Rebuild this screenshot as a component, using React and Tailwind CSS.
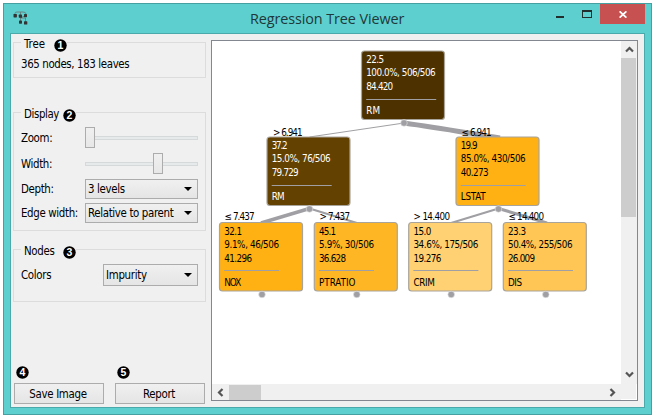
import React from 'react';

const UI_FONT = "font-['DejaVu_Sans_Condensed','DejaVu_Sans',sans-serif] [font-stretch:condensed]";

function Badge({ n, className = '' }) {
  return (
    <svg className={`block h-[13px] w-[13px] shrink-0 ${className}`} viewBox="0 0 13 13">
      <circle cx="6.5" cy="6.5" r="6.2" fill="#000" />
      <text x="6.5" y="10.2" textAnchor="middle" fontSize="10.5" fontWeight="700" fill="#fff" fontFamily="Liberation Sans, sans-serif">{n}</text>
    </svg>
  );
}

function Group({ title, n, className = '', titleClass, children }) {
  return (
    <section className={`relative ml-[2px] w-[193px] border border-[#dcdcdc] ${className}`}>
      <div className="absolute -top-[8px] left-[7px] flex h-[17px] items-center bg-[#f0f0f0] pl-[3px]">
        <span className={titleClass}>{title}</span>
        <Badge n={n} className="mt-[3px]" />
      </div>
      {children}
    </section>
  );
}

function Select({ className, children }) {
  return (
    <div className={`flex items-center justify-between border border-[#acacac] bg-linear-to-b from-[#f0f0f0] to-[#e5e5e5] pr-[5px] pl-[2px] ${className}`}>
      <span>{children}</span>
      <svg className="h-[4px] w-[8px] shrink-0" viewBox="0 0 8 4"><path d="M0 0H8L4 4Z" fill="#000" /></svg>
    </div>
  );
}

function Slider({ handleClass }) {
  return (
    <div className="relative flex h-[21px] w-[113px] items-center">
      <div className="h-[4px] w-full border border-[#d6d9d9] bg-[#e7eaea]" />
      <div className={`absolute top-0 h-[21px] w-[10px] border border-[#acacac] bg-linear-to-b from-[#f0f0f0] to-[#e7e7e7] ${handleClass}`} />
    </div>
  );
}

const nodes = [
  { x: 361.5, y: 51, fill: '#4d3200', light: true, rows: [['22.5', 18], ['100.0%, 506/506', 69.5], ['84.420', 27]], sep: 70, name: ['RM', 14] },
  { x: 267, y: 137, fill: '#634100', light: true, rows: [['37.2', 16], ['15.0%, 76/506', 59], ['79.729', 27]], sep: 60, name: ['RM', 13] },
  { x: 456, y: 137, fill: '#ffb013', rows: [['19.9', 17], ['85.0%, 430/506', 65], ['40.273', 28]], sep: 65, name: ['LSTAT', 25] },
  { x: 219.5, y: 222.5, fill: '#ffb013', rows: [['32.1', 18], ['9.1%, 46/506', 55], ['41.296', 28]], sep: 55, name: ['NOX', 17] },
  { x: 314.3, y: 222.5, fill: '#ffb624', rows: [['45.1', 17], ['5.9%, 30/506', 55], ['36.628', 27]], sep: 55, name: ['PTRATIO', 36.5] },
  { x: 408.7, y: 222.5, fill: '#ffd173', rows: [['15.0', 18], ['34.6%, 175/506', 65], ['19.276', 28]], sep: 65, name: ['CRIM', 21.5] },
  { x: 503.3, y: 222.5, fill: '#ffc655', rows: [['23.3', 18], ['50.4%, 255/506', 64.5], ['26.009', 27]], sep: 65, name: ['DIS', 14] },
];

const edges = [
  ['M404 123L309.5 137', 1],
  ['M404 123C440 128 468 133 500 138', 5],
  ['M309.5 208.5L261 223', 3.4],
  ['M309.5 208.5L357 223', 2],
  ['M498.5 208.5L451 223', 2],
  ['M498.5 208.5L547 223', 3],
];

const labels = [
  ['> 6.941', 273, 135.5, 29.5],
  ['≤ 6.941', 461.5, 135.5, 30],
  ['≤ 7.437', 224.5, 220.3, 30],
  ['> 7.437', 319.5, 220.3, 30.5],
  ['> 14.400', 413.5, 220.3, 36.5],
  ['≤ 14.400', 508.5, 220.3, 35.5],
];

const Label = ({ x, y, w, fill, children }) => (
  <text x={x} y={y} textLength={w} lengthAdjust="spacing" fill={fill}>{children}</text>
);

function TreeCanvas() {
  return (
    <svg className="block h-[343px] w-[409px] bg-white" viewBox="212 41 409 343" fontSize="9.8" fontFamily="DejaVu Sans Condensed, DejaVu Sans, sans-serif" style={{ fontStretch: 'condensed' }}>
      {edges.map(([d, w]) => <path key={d} d={d} stroke="#a0a0a4" strokeWidth={w} fill="none" />)}
      {nodes.map((n) => {
        const color = n.light ? '#fff' : '#000';
        const tx = n.x + 4.7;
        return (
          <g key={n.x}>
            <rect x={n.x} y={n.y} width="83" height="68.5" rx="3" fill={n.fill} stroke="#a9a49b" strokeWidth="1.2" />
            {n.rows.map(([t, w], i) => <Label key={t} x={tx} y={n.y + [12.2, 25.2, 39.2][i]} w={w} fill={color}>{t}</Label>)}
            <path d={`M${tx} ${Math.floor(n.y + 48) + 0.5}h${n.sep}`} stroke="#a0a0a4" />
            <Label x={tx} y={n.y + 63.4} w={n.name[1]} fill={color}>{n.name[0]}</Label>
            <circle cx={n.x + 42.5} cy={n.y + 72} r="3.3" fill="#a0a0a4" stroke="#e4e4e6" strokeWidth=".6" />
          </g>
        );
      })}
      {labels.map(([t, x, y, w]) => <Label key={t} x={x} y={y} w={w} fill="#000">{t}</Label>)}
    </svg>
  );
}

const Chevron = ({ d }) => (
  <svg className="h-[9px] w-[9px]" viewBox="0 0 9 9"><path d={d} fill="none" stroke="#555" strokeWidth="2.2" /></svg>
);

function TitleBar() {
  return (
    <header className="flex h-[29px] shrink-0 items-start">
      <svg className="mt-[7px] ml-[9px] h-[14px] w-[15px]" viewBox="0 0 15 14" fill="#333">
        <path d="M2 4V2.5Q2 1 4 1H10Q13 1 13 3M7.5 1V10M7.5 7H12.5V11M7.5 7L12.5 4.5" fill="none" stroke="#667f7f" strokeWidth=".9" />
        <rect x=".5" y="3" width="3.4" height="3.4" rx=".6" />
        <rect x="5.8" y="3.6" width="3.2" height="3.2" rx=".6" />
        <rect x="11" y="3" width="3" height="3.2" rx=".6" />
        <rect x="6" y="9.5" width="3" height="3.2" rx=".6" />
        <rect x="11" y="10.2" width="3.3" height="3.3" rx=".6" />
      </svg>
      <h1 className="ml-[222px] w-[156px] pt-[4px] font-['Open_Sans',sans-serif] text-[14.4px] leading-[21px] tracking-[-0.1px] whitespace-nowrap text-[#20383a]">Regression Tree Viewer</h1>
      <div className="mt-[12px] ml-[150px] h-[2px] w-[8px] bg-[#222d2e]" />
      <div className="mt-[6px] ml-[18px] h-[8px] w-[10px] border border-t-2 border-[#222d2e]" />
      <div className="ml-[8px] flex h-[20px] w-[45px] items-center justify-center bg-[#c75050]">
        <svg className="h-[7px] w-[8px]" viewBox="0 0 8 7"><path d="M.6 .3L7.4 6.7M7.4 .3L.6 6.7" stroke="#fff" strokeWidth="1.7" /></svg>
      </div>
    </header>
  );
}

function Sidebar() {
  return (
    <aside className="flex w-[200px] shrink-0 flex-col whitespace-nowrap">
      <Group title="Tree" n={1} titleClass="w-[30px]" className="mt-[8px] h-[36px]">
        <p className="pt-[13px] pl-[7px] tracking-[-0.38px]">365 nodes, 183 leaves</p>
      </Group>
      <Group title="Display" n={2} titleClass="w-[39px] tracking-[-0.4px]" className="mt-[34px] h-[119px]">
        <div className="grid grid-cols-[64px_113px] items-center pt-[14px] pl-[7px] tracking-[-0.35px]">
          <span>Zoom:</span><Slider handleClass="left-0" />
          <span className="mt-[5px]">Width:</span><div className="mt-[5px]"><Slider handleClass="left-[68px]" /></div>
          <span className="mt-[5px]">Depth:</span>
          <Select className="mt-[5px] h-[20px]">3 levels</Select>
          <span className="mt-[4px]">Edge width:</span>
          <Select className="mt-[4px] h-[20px]">Relative to parent</Select>
        </div>
      </Group>
      <Group title="Nodes" n={3} titleClass="w-[39px] tracking-[-0.3px]" className="mt-[18px] h-[53px]">
        <div className="flex items-center pt-[14px] pl-[7px] tracking-[-0.3px]">
          <span className="w-[82px]">Colors</span>
          <Select className="h-[22px] w-[95px]">Impurity</Select>
        </div>
      </Group>
      <div className="mt-auto mb-[3px] ml-[3px] flex gap-[11px]">
        {[['Save Image', 4], ['Report', 5]].map(([text, n]) => (
          <div key={n} className="w-[90px]">
            <Badge n={n} className="mb-[4px] ml-[2px]" />
            <button className="flex h-[21px] w-full items-center justify-center border border-[#acacac] bg-linear-to-b from-[#f0f0f0] to-[#e5e5e5] pr-[2px] tracking-[-0.3px]">{text}</button>
          </div>
        ))}
      </div>
    </aside>
  );
}

export default function App() {
  return (
    <div className="h-[418px] w-[655px] overflow-hidden bg-white pt-[3px] pl-[3px]">
      <div className="flex h-[412px] w-[649px] flex-col border border-[#45a0a2] bg-[#5dcfce]">
        <TitleBar />
        <main className={`ml-[6px] flex h-[375px] w-[635px] border border-[#4aa9aa] bg-[#f0f0f0] text-[11.4px] leading-[16px] text-black ${UI_FONT}`}>
          <Sidebar />
          <div className="mt-[6px] grid h-[361px] w-[427px] grid-cols-[409px_16px] grid-rows-[343px_16px] border border-[#828790] bg-[#f0f0f0]">
            <TreeCanvas />
            <div className="flex flex-col items-center">
              <div className="flex h-[17px] items-center"><Chevron d="M1 6.5L4.5 3L8 6.5" /></div>
              <div className="mr-px h-[159px] w-[15px] bg-[#cdcdcd]" />
              <div className="mt-auto flex h-[19px] items-center"><Chevron d="M1 2.5L4.5 6L8 2.5" /></div>
            </div>
            <div className="flex items-center">
              <div className="flex w-[17px] justify-center"><Chevron d="M6.5 1L3 4.5L6.5 8" /></div>
              <div className="h-[15px] w-[32px] bg-[#cdcdcd]" />
              <div className="mr-[4px] ml-auto"><Chevron d="M2.5 1L6 4.5L2.5 8" /></div>
            </div>
            <div className="border-r border-b border-white" />
          </div>
        </main>
      </div>
    </div>
  );
}
